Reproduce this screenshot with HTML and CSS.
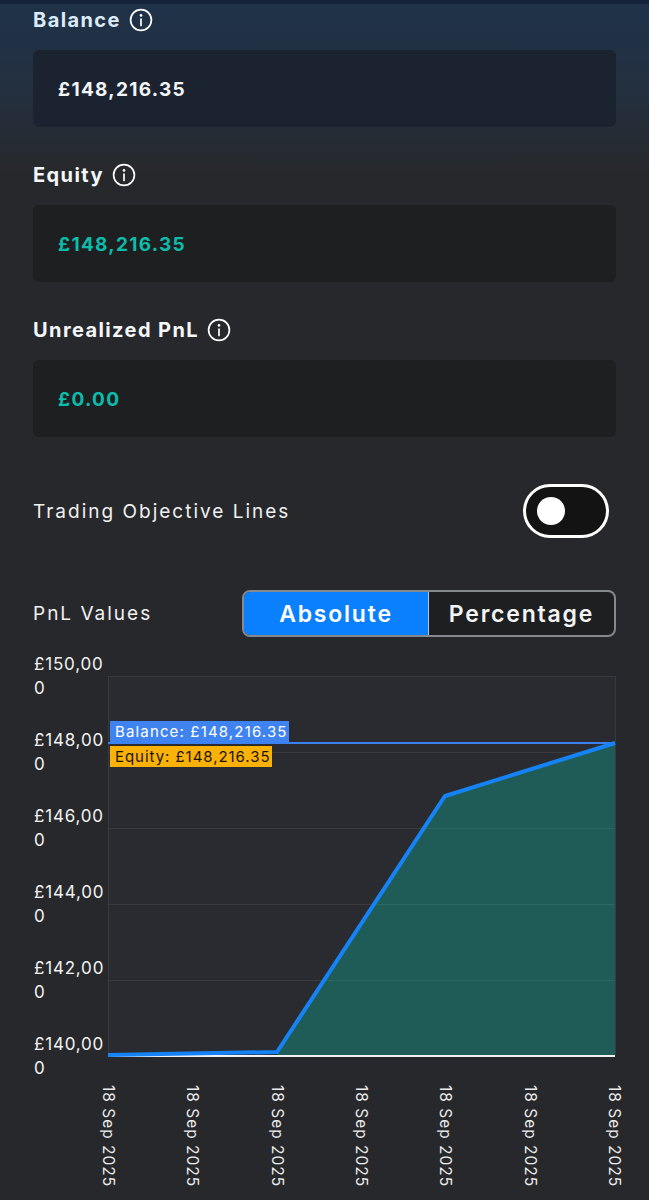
FILE: index.html
```html
<!DOCTYPE html>
<html lang="en">
<head>
  <meta charset="UTF-8" />
  <title>Account overview</title>
  <link rel="stylesheet" href="styles.css">
</head>
<body>
  <div class="top-strip"></div>

  <section class="stats">
    <div class="stat">
      <div class="stat-label">Balance
        <svg class="info" viewBox="0 0 24 24"><circle cx="12" cy="12" r="10.4"/><path d="M12 11v6.5"/><circle class="dot" cx="12" cy="7.4" r="1.3"/></svg>
      </div>
      <div class="stat-box">£148,216.35</div>
    </div>
    <div class="stat">
      <div class="stat-label">Equity
        <svg class="info" viewBox="0 0 24 24"><circle cx="12" cy="12" r="10.4"/><path d="M12 11v6.5"/><circle class="dot" cx="12" cy="7.4" r="1.3"/></svg>
      </div>
      <div class="stat-box green">£148,216.35</div>
    </div>
    <div class="stat">
      <div class="stat-label">Unrealized PnL
        <svg class="info" viewBox="0 0 24 24"><circle cx="12" cy="12" r="10.4"/><path d="M12 11v6.5"/><circle class="dot" cx="12" cy="7.4" r="1.3"/></svg>
      </div>
      <div class="stat-box green">£0.00</div>
    </div>
  </section>

  <div class="row objective-row">
    <span class="row-label">Trading Objective Lines</span>
    <div class="toggle"><div class="knob"></div></div>
  </div>

  <div class="row pnl-row">
    <span class="row-label">PnL Values</span>
    <div class="segment">
      <div class="seg active">Absolute</div>
      <div class="seg">Percentage</div>
    </div>
  </div>

  <svg class="chart" viewBox="0 650 649 550" width="649" height="550">
    <rect class="plot" x="108" y="676" width="507" height="380"/>
    <g class="grid">
      <path d="M108 676.5H615M108 752.5H615M108 828.5H615M108 904.5H615M108 980.5H615"/>
      <path d="M108.5 676V1056M615.5 676V1056"/>
    </g>
    <path class="area" d="M277 1052L445 796L615 743V1056H277Z"/>
    <path class="area-grid" d="M324 980.5H615M374 904.5H615M424 828.5H615"/>
    <path class="baseline" d="M108 1056H615"/>
    <path class="balance-line" d="M108 743H615"/>
    <path class="equity-line" d="M108 1055L277 1052L445 796L615 743"/>

    <rect class="tag-blue" x="110" y="721" width="179" height="21"/>
    <text class="tag-text" x="115" y="737">Balance: £148,216.35</text>
    <rect class="tag-amber" x="110" y="746" width="162" height="21"/>
    <text class="tag-text dark" x="115" y="762">Equity: £148,216.35</text>

    <g class="y-labels">
      <text x="34" y="670">£150,00</text><text x="34" y="694">0</text>
      <text x="34" y="746">£148,00</text><text x="34" y="770">0</text>
      <text x="34" y="822">£146,00</text><text x="34" y="846">0</text>
      <text x="34" y="898">£144,00</text><text x="34" y="922">0</text>
      <text x="34" y="974">£142,00</text><text x="34" y="998">0</text>
      <text x="34" y="1050">£140,00</text><text x="34" y="1074">0</text>
    </g>
    <g class="x-labels">
      <text transform="translate(103 1085) rotate(90)">18 Sep 2025</text>
      <text transform="translate(187 1085) rotate(90)">18 Sep 2025</text>
      <text transform="translate(272 1085) rotate(90)">18 Sep 2025</text>
      <text transform="translate(356 1085) rotate(90)">18 Sep 2025</text>
      <text transform="translate(440 1085) rotate(90)">18 Sep 2025</text>
      <text transform="translate(525 1085) rotate(90)">18 Sep 2025</text>
      <text transform="translate(609 1085) rotate(90)">18 Sep 2025</text>
    </g>
  </svg>
</body>
</html>
```

FILE: styles.css
```css
* {
  box-sizing: border-box;
}
html, body {
  margin: 0;
  padding: 0;
}
body {
  width: 649px;
  height: 1200px;
  overflow: hidden;
  font-family: "Inter", "Liberation Sans", sans-serif;
  color: #fff;
  background: linear-gradient(180deg, #1f3249 0, #23303f 90px, #27282b 175px, #27282b 100%);
}
.top-strip {
  height: 4px;
  background: #14233a;
}
.stats {
  padding: 0 33px;
}
.stat {
  height: 155px;
}
.stat-label {
  display: flex;
  align-items: center;
  gap: 8px;
  height: 32px;
  font-size: 20px;
  font-weight: 700;
  letter-spacing: 1.4px;
  color: #f4f7fa;
}
.stat:first-child .stat-label {
  color: #dcebf8;
}
.info {
  width: 24px;
  height: 24px;
  fill: none;
  stroke: #fff;
  stroke-width: 1.7;
  stroke-linecap: round;
}
.info .dot {
  fill: #fff;
  stroke: none;
}
.stat-box {
  display: flex;
  align-items: center;
  height: 77px;
  margin-top: 14px;
  padding: 2px 0 0 25px;
  border-radius: 6px;
  background: #1e1f21;
  font-size: 19px;
  font-weight: 700;
  letter-spacing: 1.3px;
  color: #f2f4f6;
}
.stat:first-child .stat-box {
  background: #1b2330;
}
.green {
  color: #0cbcaa;
}
.row {
  display: flex;
  align-items: center;
  justify-content: space-between;
  padding-left: 33px;
}
.row-label {
  font-size: 19px;
  letter-spacing: 2px;
  color: #f0f0f0;
}
.objective-row {
  height: 54px;
  margin-top: 15px;
  padding-right: 40px;
}
.toggle {
  width: 86px;
  height: 54px;
  padding-left: 11px;
  display: flex;
  align-items: center;
  border: 3px solid #fff;
  border-radius: 27px;
  background: #131313;
}
.knob {
  width: 28px;
  height: 28px;
  border-radius: 50%;
  background: #fff;
}
.pnl-row {
  height: 47px;
  margin-top: 52px;
  padding-right: 33px;
}
.segment {
  display: flex;
  width: 374px;
  height: 47px;
  border: 2px solid #85888c;
  border-radius: 8px;
  overflow: hidden;
  background: #1e1f21;
}
.seg {
  display: flex;
  align-items: center;
  justify-content: center;
  flex: 1;
  font-size: 23px;
  font-weight: 600;
  letter-spacing: 1.8px;
  color: #f4f4f4;
}
.seg.active {
  flex: 0 0 185px;
  background: #0a80ff;
  border-right: 1px solid #b9c4d0;
  color: #fff;
}
.chart {
  display: block;
  margin-top: 13px;
}
.plot {
  fill: #2a2b30;
}
.grid,
.grid path {
  fill: none;
  stroke: #383a3f;
  stroke-width: 1;
}
.area {
  fill: #1f5c58;
}
.area-grid {
  stroke: #2c6762;
  stroke-width: 1;
}
.baseline {
  stroke: #f2f2f2;
  stroke-width: 2;
}
.balance-line {
  stroke: #3b82f0;
  stroke-width: 2;
}
.equity-line {
  fill: none;
  stroke: #1583f5;
  stroke-width: 4;
}
.tag-blue {
  fill: #3f83f0;
}
.tag-amber {
  fill: #fbb208;
}
.tag-text {
  font-size: 15px;
  letter-spacing: 1.15px;
  fill: #fff;
}
.tag-text.dark {
  letter-spacing: 0.95px;
  fill: #1c1404;
}
.y-labels text {
  font-size: 17px;
  letter-spacing: 0.8px;
  fill: #f2f2f2;
}
.x-labels text {
  font-size: 15.5px;
  letter-spacing: 1px;
  fill: #ececec;
}
```
